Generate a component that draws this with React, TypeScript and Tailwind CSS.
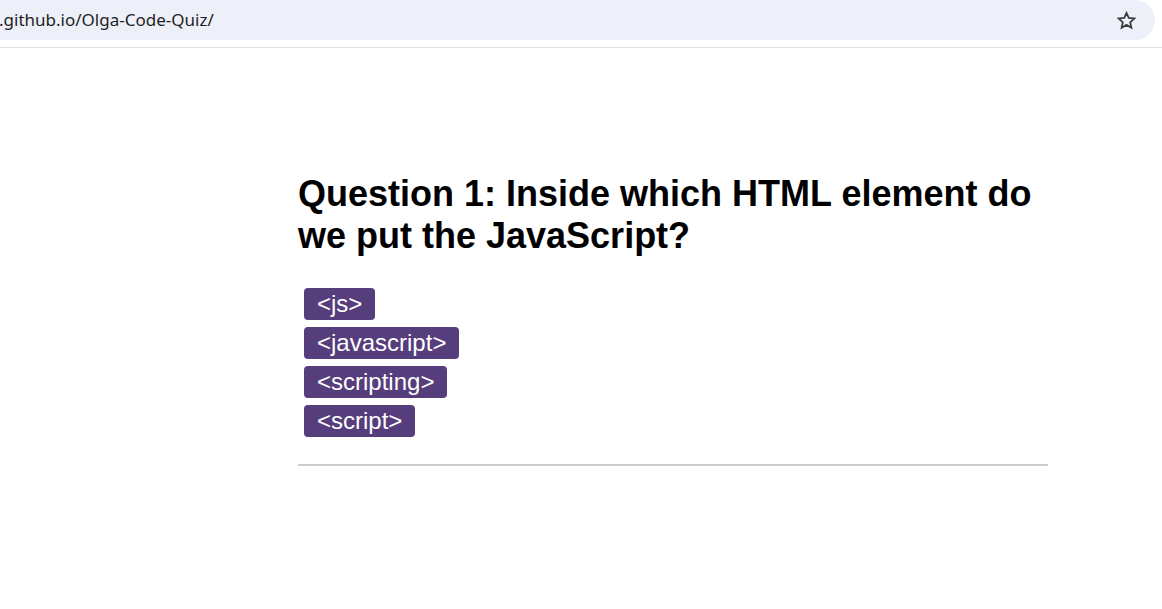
export default function App() {
  const choices = ['<js>', '<javascript>', '<scripting>', '<script>']
  return (
    <div className="min-h-[609px] bg-white">
      {/* browser address bar */}
      <div className="h-[48px] border-b border-[#e3e3e3] bg-white">
        <div className="h-[40px] w-[1155px] rounded-r-[20px] bg-[#edf0f8] flex items-center justify-between pr-[18px]">
          <span className="text-[17px] text-[#1f1f1f] -ml-[1px]" style={{ fontFamily: '"Noto Sans", "Open Sans", sans-serif' }}>
            .github.io/Olga-Code-Quiz/
          </span>
          <svg width="21" height="21" viewBox="0 0 24 24" fill="none" stroke="#3c3c3c" strokeWidth="2" strokeLinejoin="miter">
            <path d="M12 3.2l2.6 5.9 6.4.6-4.8 4.3 1.4 6.3L12 17l-5.6 3.3 1.4-6.3L3 9.7l6.4-.6z" />
          </svg>
        </div>
      </div>

      <div className="w-[750px] ml-[298px] pt-[125px]" style={{ fontFamily: '"Liberation Sans", Arial, sans-serif' }}>
        <h1 className="text-[36px] font-bold leading-[42px] text-black">
          Question 1: Inside which HTML element do we put the JavaScript?
        </h1>
        <div className="flex flex-col items-start gap-[7px] mt-[31px] ml-[6px]">
          {choices.map((c) => (
            <button key={c} className="h-[32px] px-[13px] rounded-[4px] bg-[#563d7c] text-white text-[24px] leading-none">
              {c}
            </button>
          ))}
        </div>
        <div className="mt-[27px] h-[2px] bg-[#cccccc]" />
      </div>
    </div>
  )
}
